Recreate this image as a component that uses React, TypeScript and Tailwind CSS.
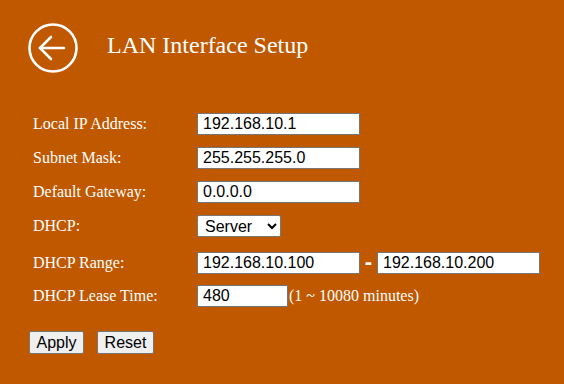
import { useState } from "react"

function BackIcon() {
  return (
    <svg width="52" height="52" viewBox="0 0 52 52" fill="none" stroke="white" strokeWidth="2.6" strokeLinecap="round" strokeLinejoin="round">
      <circle cx="26" cy="26" r="23.5" />
      <path d="M13 26 H37" />
      <path d="M24 15 L13 26 L24 37" />
    </svg>
  )
}

function Field({ value, width = "w-[163px]" }: { value: string; width?: string }) {
  const [v, setV] = useState(value)
  return (
    <input
      value={v}
      onChange={(e) => setV(e.target.value)}
      className={`${width} h-[22px] bg-white border border-[#767676] px-[5px] font-['Liberation_Sans',Arial,sans-serif] text-[16px] text-black outline-none`}
    />
  )
}

function Row({ label, top, children }: { label: string; top: string; children: React.ReactNode }) {
  return (
    <div className={`flex h-[22px] items-center ${top}`}>
      <div className="w-[197px] shrink-0 pl-[33px] font-['Liberation_Serif','Times_New_Roman',serif] text-[16px] leading-[22px] text-white">
        {label}
      </div>
      {children}
    </div>
  )
}

export default function App() {
  return (
    <div className="w-full min-h-screen bg-[#c05800]">
      <div className="flex items-center pt-[22px] pl-[27px]">
        <BackIcon />
        <h1 className="ml-[28px] -mt-[6px] font-['Liberation_Serif','Times_New_Roman',serif] text-[24px] text-white">
          LAN Interface Setup
        </h1>
      </div>

      <div className="flex flex-col">
        <Row label="Local IP Address:" top="mt-[39px]">
          <Field value="192.168.10.1" />
        </Row>
        <Row label="Subnet Mask:" top="mt-[12px]">
          <Field value="255.255.255.0" />
        </Row>
        <Row label="Default Gateway:" top="mt-[12px]">
          <Field value="0.0.0.0" />
        </Row>
        <Row label="DHCP:" top="mt-[12px]">
          <select
            defaultValue="server"
            className="w-[84px] h-[22px] bg-white border border-[#767676] rounded-[2px] pl-[3px] font-['Liberation_Sans',Arial,sans-serif] text-[16px] text-black"
          >
            <option value="disable">Disable</option>
            <option value="client">Client</option>
            <option value="server">Server</option>
          </select>
        </Row>
        <Row label="DHCP Range:" top="mt-[15px]">
          <Field value="192.168.10.100" />
          <span className="w-[17px] -mt-[2px] text-center font-['Liberation_Sans',Arial,sans-serif] text-[22px] font-bold leading-none text-white">
            -
          </span>
          <Field value="192.168.10.200" />
        </Row>
        <Row label="DHCP Lease Time:" top="mt-[11px]">
          <Field value="480" width="w-[91px]" />
          <span className="ml-[1px] font-['Liberation_Serif','Times_New_Roman',serif] text-[16px] text-white">
            (1 ~ 10080 minutes)
          </span>
        </Row>

        <div className="flex gap-[13px] pl-[29px] mt-[24px]">
          <button className="w-[55px] h-[23px] bg-[#efefef] border border-[#767676] rounded-[2px] font-['Liberation_Sans',Arial,sans-serif] text-[16px] leading-none text-black">
            Apply
          </button>
          <button className="w-[57px] h-[23px] bg-[#efefef] border border-[#767676] rounded-[2px] font-['Liberation_Sans',Arial,sans-serif] text-[16px] leading-none text-black">
            Reset
          </button>
        </div>
      </div>
    </div>
  )
}
